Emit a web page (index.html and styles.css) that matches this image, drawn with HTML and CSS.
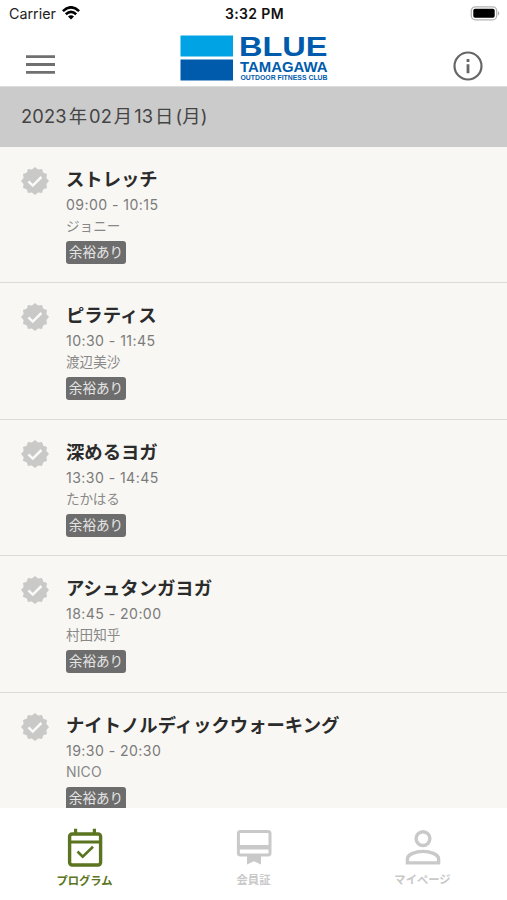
FILE: index.html
```html
<!DOCTYPE html>
<html lang="ja">
<head>
<meta charset="utf-8">
<title>BLUE TAMAGAWA</title>
<link rel="stylesheet" href="styles.css">
</head>
<body>
<svg class="defs" aria-hidden="true">
  <symbol id="verified" viewBox="0 0 28 28">
    <path fill="#c9cac8" d="M28 14L25.4 17.1L26 21L22.3 22.3L21 26L17.1 25.4L14 28L10.9 25.4L7 26L5.7 22.3L2 21L2.6 17.1L0 14L2.6 10.9L2 7L5.7 5.7L7 2L10.9 2.6L14 0L17.1 2.6L21 2L22.3 5.7L26 7L25.4 10.9Z"/>
    <path fill="none" stroke="#fafaf8" stroke-width="2.5" d="M7.4 14.3L11.8 18.6L20.4 10"/>
  </symbol>
</svg>
<header class="top">
  <div class="status">
    <div class="carrier">Carrier
      <svg class="wifi" width="18" height="14" viewBox="0 0 18 14"><g fill="none" stroke="#000" stroke-width="2.6"><path d="M.9 5.1Q9-2.5 17.1 5.1"/><path d="M3.8 8.2Q9 3.5 14.2 8.2"/></g><path d="M6 10.4Q9 8 12 10.4L9 13.6Z"/></svg>
    </div>
    <div class="clock">3:32 PM</div>
    <svg class="battery" width="31" height="15" viewBox="0 0 31 15"><rect x="2.3" y=".8" width="25.4" height="13" rx="4" fill="#fff" stroke="#b4b4b4" stroke-width="1.3"/><rect x="4.3" y="2.8" width="21.4" height="9" rx="1.8"/><path fill="#aaa" d="M29 5Q31.4 7.3 29 9.7Z"/></svg>
  </div>
  <div class="bar">
    <svg class="menu" width="29" height="20" viewBox="0 0 29 20"><path stroke="#707070" stroke-width="2.8" d="M0 2.6H29M0 10.5H29M0 18.3H29"/></svg>
    <svg class="logo" width="149" height="48" viewBox="0 0 149 48">
      <path fill="#00a4e4" d="M.5.5H53V21.5H.5Z"/><path fill="#005bac" d="M.5 24.5H53V45.5H.5Z"/>
      <g class="logo-text"><text class="l1" x="59" y="20.5" textLength="88.5" lengthAdjust="spacingAndGlyphs">BLUE</text><text class="l2" x="60" y="36.7" textLength="87.5" lengthAdjust="spacingAndGlyphs">TAMAGAWA</text><text class="l3" x="60.5" y="45.3" textLength="87" lengthAdjust="spacingAndGlyphs">OUTDOOR FITNESS CLUB</text></g>
    </svg>
    <svg class="info" width="30" height="30" viewBox="0 0 30 30"><circle cx="15" cy="15" r="13.5" fill="none" stroke="#666" stroke-width="2.2"/><path stroke="#666" stroke-width="2.8" d="M15 13.3V22.3M15 8V11"/></svg>
  </div>
</header>
<h1 class="date">2023<span>年</span>02<span>月</span>13<span>日</span>(月)</h1>
<main class="list">
  <article class="item"><svg class="badge"><use href="#verified"/></svg><div><h2>ストレッチ</h2><p class="time">09:00 - 10:15</p><p class="coach">ジョニー</p><span class="tag">余裕あり</span></div></article>
  <article class="item"><svg class="badge"><use href="#verified"/></svg><div><h2>ピラティス</h2><p class="time">10:30 - 11:45</p><p class="coach">渡辺美沙</p><span class="tag">余裕あり</span></div></article>
  <article class="item"><svg class="badge"><use href="#verified"/></svg><div><h2>深めるヨガ</h2><p class="time">13:30 - 14:45</p><p class="coach">たかはる</p><span class="tag">余裕あり</span></div></article>
  <article class="item"><svg class="badge"><use href="#verified"/></svg><div><h2>アシュタンガヨガ</h2><p class="time">18:45 - 20:00</p><p class="coach">村田知乎</p><span class="tag">余裕あり</span></div></article>
  <article class="item"><svg class="badge"><use href="#verified"/></svg><div><h2>ナイトノルディックウォーキング</h2><p class="time">19:30 - 20:30</p><p class="coach latin">NICO</p><span class="tag">余裕あり</span></div></article>
</main>
<nav class="tabs">
  <a class="tab active"><svg width="36" height="40" viewBox="0 0 36 40"><g fill="none" stroke="currentColor"><rect x="2.6" y="6" width="31" height="31" rx="2.5" stroke-width="3.4"/><path stroke-width="3.2" d="M8.6 .8V6M27.4 .8V6M2 14H34"/><path stroke-width="2.6" d="M10.5 23.5L15.7 28.7L26 18.8"/></g></svg><span>プログラム</span></a>
  <a class="tab"><svg width="36" height="40" viewBox="0 0 36 40"><rect x="2.4" y="3.6" width="31.6" height="23.4" rx="2" fill="none" stroke="currentColor" stroke-width="3"/><path fill="currentColor" d="M2 17H34V21.4H2ZM11 27H25V36.5L18 33.2L11 36.5Z"/></svg><span>会員証</span></a>
  <a class="tab"><svg width="36" height="40" viewBox="0 0 36 40"><g fill="none" stroke="currentColor" stroke-width="3.4"><circle cx="18" cy="10.6" r="6.9"/><path d="M2.4 34.9V31C2.4 26 11 23.4 18 23.4S33.6 26 33.6 31V34.9Z"/></g></svg><span>マイページ</span></a>
</nav>
</body>
</html>
```
FILE: styles.css
```css
* { box-sizing: border-box; margin: 0; }
body { width: 507px; height: 900px; overflow: hidden; display: flex; flex-direction: column; background: #fff; font-family: Inter, "Noto Sans CJK JP", sans-serif; }
.defs { position: absolute; width: 0; height: 0; }
.top { height: 87px; flex: none; border-bottom: 1px solid #ddd; }
.status { height: 28px; display: grid; grid-template-columns: 1fr auto 1fr; align-items: center; padding: 0 7px 0 9px; color: #222; font-size: 14.3px; line-height: 28px; }
.carrier { display: flex; align-items: center; gap: 6px; }
.wifi { margin-top: -2px; }
.clock { font-weight: 600; font-size: 14px; letter-spacing: .35px; color: #111; }
.battery { justify-self: end; margin-top: -1px; }
.bar { height: 58px; display: grid; grid-template-columns: 1fr auto 1fr; padding: 7px 24px 0 26px; }
.menu { margin-top: 19px; }
.logo { overflow: visible; }
.info { justify-self: end; margin-top: 16px; }
.logo-text { fill: #005bac; font-family: "Liberation Sans", Arial, sans-serif; font-weight: 700; }
.l1 { font-size: 28px; }
.l2 { font-size: 15px; }
.l3 { font-size: 7.2px; }
.date { height: 60px; flex: none; padding-left: 21px; background: #cbcbcb; color: #444; font-size: 18.3px; line-height: 59px; font-weight: 400; letter-spacing: .15px; white-space: nowrap; }
.date span { margin: 0 1.9px; }
.list { flex: 1; min-height: 0; overflow: hidden; background: #f8f7f3; }
.item { height: 136.4px; display: flex; gap: 17px; padding: 20px 21px 0; border-bottom: 1.4px solid #dbdbd8; }
.badge { width: 28px; height: 28px; flex: none; }
h2 { font-size: 18.35px; line-height: 24px; font-weight: 700; color: #2b2b2b; white-space: nowrap; }
.time { margin-top: 3px; font-size: 14.1px; line-height: 22px; letter-spacing: .43px; color: #7b7b7b; }
.coach { font-size: 13.6px; line-height: 20px; color: #888; }
.latin { font-size: 14px; letter-spacing: .15px; }
.tag { display: block; width: 60px; height: 23px; margin-top: 5px; border-radius: 3px; background: #6d6d6d; color: #e5e5e5; font-size: 13.6px; line-height: 22px; text-align: center; white-space: nowrap; }
.tabs { height: 92px; flex: none; display: grid; grid-template-columns: repeat(3, 1fr); padding-top: 20px; background: #fff; }
.tab { display: flex; flex-direction: column; align-items: center; color: #c9c9c9; font-size: 11.3px; line-height: 16px; font-weight: 700; gap: 4px; }
.active { color: #5b7420; }
.active span { padding-top: 1px; }
```
